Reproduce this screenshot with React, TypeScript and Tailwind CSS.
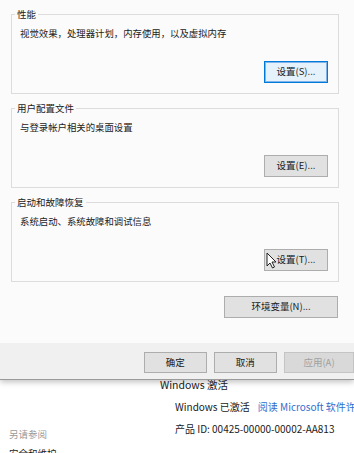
import React from "react";

const btn =
  "h-[21px] border border-solid border-[#adadad] bg-[#e1e1e1] text-[9.5px] text-[#1a1a1a] flex items-center justify-center leading-none";

function Group({
  title,
  desc,
  label,
  focused,
  cursor,
}: {
  title: string;
  desc: string;
  label: string;
  focused?: boolean;
  cursor?: boolean;
}) {
  return (
    <div className="relative border border-solid border-[#dcdcdc] mx-[11px] w-[328px] h-[80px] pl-[8px] pr-[10px] pt-[12px] pb-[10px] flex flex-col">
      {/* group title sits on the border line */}
      <span className="absolute left-[3px] -top-[7px] px-[2px] bg-[#fbfbfb] text-[9.5px] leading-[12px] text-[#1a1a1a]">
        {title}
      </span>
      <div className="text-[9.4px] leading-[12px] text-[#1a1a1a]">{desc}</div>
      <div className="flex-1" />
      <div className="flex justify-end">
        <div
          className={
            focused
              ? "relative w-[64px] h-[22px] border border-solid border-[#0078d7] bg-[#e5f1fb] outline outline-1 outline-[#7eb4ea] -outline-offset-2 text-[9.5px] text-[#1a1a1a] flex items-center justify-center leading-none"
              : "relative w-[64px] " + btn + " h-[22px]"
          }
        >
          {label}
          {cursor && (
            <svg
              className="absolute left-[1px] top-[2px]"
              width="11"
              height="17"
              viewBox="0 0 11 17"
            >
              <path
                d="M1 1 L1 14 L4 11 L6.5 16 L8.5 15 L6 10 L10 10 Z"
                fill="#ffffff"
                stroke="#222222"
                strokeWidth="1"
                strokeLinejoin="round"
              />
            </svg>
          )}
        </div>
      </div>
    </div>
  );
}

export default function App() {
  return (
    <div
      className="w-[354px] h-[453px] overflow-hidden bg-white flex flex-col"
      style={{ fontFamily: '"Noto Sans CJK SC", "Noto Sans", sans-serif' }}
    >
      {/* dialog */}
      <div className="relative z-10 h-[380px] shrink-0 flex flex-col shadow-[0_2px_6px_rgba(0,0,0,0.25)] border-b border-solid border-[#9a9a9a]">
        <div className="bg-[#fbfbfb] h-[343px] flex flex-col pt-[14px] gap-[14px]">
          <Group
            title="性能"
            desc="视觉效果，处理器计划，内存使用，以及虚拟内存"
            label="设置(S)..."
            focused
          />
          <Group
            title="用户配置文件"
            desc="与登录帐户相关的桌面设置"
            label="设置(E)..."
          />
          <Group
            title="启动和故障恢复"
            desc="系统启动、系统故障和调试信息"
            label="设置(T)..."
            cursor
          />
          <div className="flex justify-end pr-[16px]">
            <div className={btn + " w-[114px] h-[22px]"}>环境变量(N)...</div>
          </div>
        </div>
        <div className="bg-[#f0f0f0] flex-1 flex items-start pt-[9px] pl-[144px] gap-[7px]">
          <div className={btn + " w-[66px]"}>确定</div>
          <div className={btn + " w-[67px]"}>取消</div>
          <div className="h-[21px] w-[70px] shrink-0 border border-solid border-[#c4c4c4] bg-[#d9d9d9] text-[9.5px] text-[#a0a0a0] flex items-center justify-center leading-none">
            应用(A)
          </div>
        </div>
      </div>

      {/* window behind */}
      <div className="flex-1 relative bg-white text-[#1a1a1a]">
        <div className="pl-[160px] text-[10.5px] leading-[12px] -mt-[1px]">
          Windows 激活
        </div>
        <div className="pl-[175px] mt-[9px] text-[10px] leading-[13px] whitespace-nowrap flex gap-[8px]">
          <span>Windows 已激活</span>
          <span className="text-[#2f6fd0]">阅读 Microsoft 软件许可条款</span>
        </div>
        <div className="flex items-start mt-[9px]">
          <div className="pl-[9px] pt-[6px] w-[175px] flex flex-col gap-[7px]">
            <span className="text-[9.5px] leading-[12px] text-[#9a9a9a]">另请参阅</span>
            <span className="text-[9.5px] leading-[12px] text-[#1a1a1a]">安全和维护</span>
          </div>
          <span className="text-[10px] leading-[13px] whitespace-nowrap">
            产品 ID: 00425-00000-00002-AA813
          </span>
        </div>
      </div>
    </div>
  );
}
